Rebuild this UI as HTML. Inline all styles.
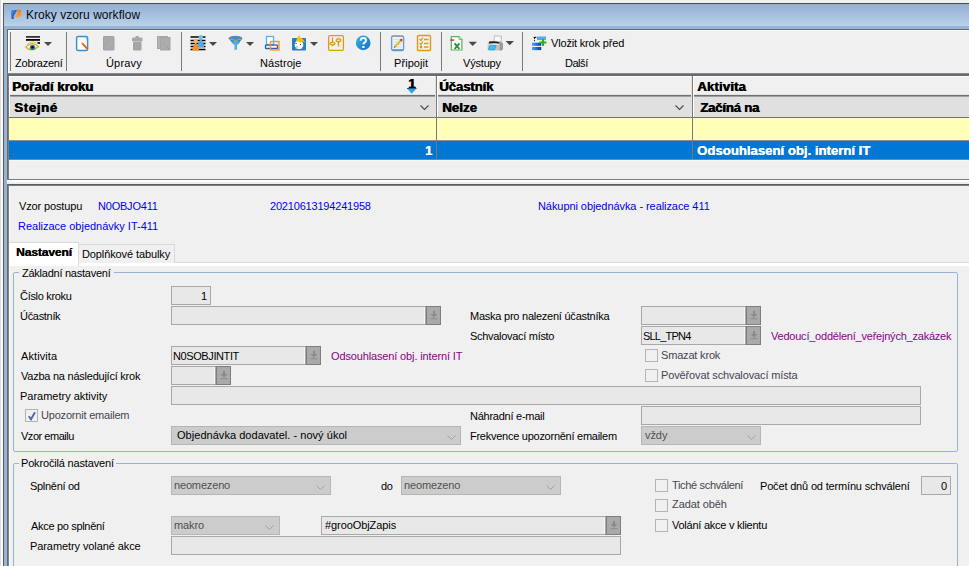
<!DOCTYPE html>
<html><head><meta charset="utf-8">
<style>
*{margin:0;padding:0;box-sizing:border-box}
html,body{width:969px;height:566px;overflow:hidden;background:#f0f0f0;font-family:"Liberation Sans",sans-serif;font-size:11px;color:#000}
.a{position:absolute}
.t{position:absolute;white-space:pre;line-height:13px;font-size:11px}
.b{font-weight:bold}
.blue{color:#0000f0}
.pur{color:#8a008a}
.gr{color:#6d6d6d}
.fld{position:absolute;background:#e8e8e8;border:1px solid #a8a8ac}
.cmb{position:absolute;background:#cccccc;border:1px solid #b6b6b6}
.btn{position:absolute;top:-1px;right:-1px;bottom:-1px;width:16px;background:#a9a9a9;border:1px solid #7e7e7e;border-left-color:#a8a8b0;box-shadow:inset 1px 0 0 #7e7e7e}
.btn::before{content:"";position:absolute;left:-2px;top:0;bottom:0;width:1px;background:#f6f6f6}
.chk{position:absolute;width:13px;height:13px;border:1px solid #b4b4b4;background:#f0f0f0}
.sep{position:absolute;width:1px;background:#7a7a7a;top:32px;height:39px}
.arr{position:absolute;width:0;height:0;border-left:4px solid transparent;border-right:4px solid transparent;border-top:4px solid #444}
</style></head><body>
<!-- window frame -->
<div class="a" style="left:0;top:0;width:1px;height:566px;background:#dcdcdc"></div>
<div class="a" style="left:1px;top:0;width:2px;height:566px;background:#f8f8f8"></div>
<div class="a" style="left:3px;top:3px;width:966px;height:1px;background:#4a4a4a"></div>
<div class="a" style="left:3px;top:3px;width:1px;height:563px;background:#5a5a5a"></div>
<div class="a" style="left:4px;top:4px;width:965px;height:22px;background:linear-gradient(#93afd0,#bad2ea)"></div>
<div class="a" style="left:4px;top:26px;width:965px;height:3px;background:#97b3d3"></div>
<div class="a" style="left:4px;top:26px;width:3px;height:540px;background:#97b3d3"></div>
<div class="a" style="left:7px;top:29px;width:962px;height:1px;background:#6a6a6a"></div>
<div class="a" style="left:7px;top:29px;width:1px;height:537px;background:#6a6a6a"></div>
<div class="a" style="left:8px;top:30px;width:961px;height:1px;background:#fafafa"></div>
<div class="a" style="left:8px;top:30px;width:1px;height:43px;background:#fafafa"></div>

<!-- title -->
<svg class="a" style="left:8px;top:6px" width="18" height="16" viewBox="0 0 18 16">
<defs><linearGradient id="lgb" x1="0" y1="0" x2="1" y2="1"><stop offset="0" stop-color="#4a9cf0"/><stop offset="1" stop-color="#0a2a9a"/></linearGradient>
<linearGradient id="lgo" x1="0" y1="0" x2="0" y2="1"><stop offset="0" stop-color="#f27a1a"/><stop offset="1" stop-color="#ffa040"/></linearGradient></defs>
<path d="M3.5 4 L9.3 4 L5.8 10 L5.6 13 L3.6 13 L3 7 Z" fill="url(#lgb)"/>
<path d="M10 3 L13 4 L13.2 9.5 L10.5 11.5 L7 11.5 L7 9.5 L9 8.5 L9.5 5 Z" fill="url(#lgo)"/>
</svg>

<!-- toolbar -->
<div class="sep" style="left:10px"></div>
<div class="sep" style="left:66px"></div>
<div class="sep" style="left:181px"></div>
<div class="sep" style="left:380px"></div>
<div class="sep" style="left:441px"></div>
<div class="sep" style="left:522px"></div>
<div class="a" style="left:7px;top:73px;width:962px;height:1px;background:#858a92"></div>
<div class="a" style="left:7px;top:74px;width:962px;height:2px;background:#6a6a6a"></div>
<!-- toolbar icons -->
<svg class="a" style="left:24px;top:34px" width="30" height="19" viewBox="0 0 30 19">
<rect x="2" y="2" width="14" height="1.8" fill="#333"/>
<rect x="2" y="5" width="14" height="1.8" fill="#000"/>
<rect x="13.5" y="8" width="2.5" height="2" fill="#222"/>
<path d="M1.8 13.2 Q8 6.5 14.5 12.5 Q8 18.8 1.8 13.2 Z" fill="#f4f4f0" stroke="#dcb020" stroke-width="1.2"/>
<path d="M3 10.5 Q8 6.5 12.5 8.8" fill="none" stroke="#e8c040" stroke-width="1"/>
<circle cx="8.5" cy="13.4" r="2.7" fill="#2a84b0"/>
<circle cx="8.5" cy="13.2" r="1.2" fill="#000"/>
<path d="M20 8 L28 8 L24 12 Z" fill="#484848"/>
</svg>
<svg class="a" style="left:75px;top:35px" width="16" height="17" viewBox="0 0 16 17">
<rect x="1.6" y="1.6" width="11" height="13.8" rx="1.5" fill="#fff" stroke="#3a90d2" stroke-width="1.5"/>
<path d="M9.5 2.3 L11.9 2.3 L11.9 4.8 Z" fill="#8cc4ec"/>
<path d="M7.3 8.3 L12 13.5" stroke="#e86a1c" stroke-width="2" stroke-linecap="round"/>
<path d="M6.6 7.6 L7.6 8.6" stroke="#f6d890" stroke-width="1.6"/>
</svg>
<svg class="a" style="left:102px;top:35px" width="14" height="17" viewBox="0 0 14 17">
<rect x="1.5" y="1.5" width="10.5" height="13.5" rx="0.5" fill="#a9a9a9" stroke="#a2a2a2" stroke-width="1"/>
<path d="M5 12.5 L10.5 7" stroke="#b6b6b6" stroke-width="1"/>
</svg>
<svg class="a" style="left:131px;top:35px" width="13" height="17" viewBox="0 0 13 17">
<rect x="4.5" y="1" width="3.5" height="2" rx="0.8" fill="#a8a8a8"/>
<rect x="1" y="2.5" width="10.5" height="4" rx="1" fill="#a8a8a8"/>
<rect x="2" y="6.8" width="8.5" height="8.7" rx="1" fill="#a4a4a4"/>
<path d="M4.5 8 V14 M6.3 8 V14 M8.1 8 V14" stroke="#ababab" stroke-width="0.6"/>
</svg>
<svg class="a" style="left:156px;top:35px" width="16" height="17" viewBox="0 0 16 17">
<rect x="1.5" y="1.5" width="10" height="12" fill="#b2b2b2" stroke="#a6a6a6" stroke-width="1"/>
<rect x="4.5" y="2.5" width="9.5" height="12.5" fill="#acacac" stroke="#a4a4a4" stroke-width="1"/>
<path d="M9.5 10.5 L13.5 14.5" stroke="#999" stroke-width="1"/>
</svg>
<svg class="a" style="left:189px;top:34px" width="30" height="18" viewBox="0 0 30 18">
<path d="M1.5 3 H16.5 M1.5 6.5 H16.5 M1.5 9.5 H16.5 M1.5 12.5 H16.5 M1.5 15.5 H16.5" stroke="#000" stroke-width="1.5"/>
<circle cx="11.8" cy="3.3" r="2.2" fill="#6cc0ec"/>
<path d="M10.9 5.6 L12.7 5.6 Q13.3 8.5 15.2 10.8 Q15.6 13 14.5 13.3 L9 13.3 Q8 13 8.4 10.8 Q10.3 8.5 10.9 5.6 Z" fill="#52ace0"/>
<circle cx="6.7" cy="6.8" r="2.1" fill="#fcb060"/>
<path d="M5.8 9 L7.6 9 Q8.3 12 10 14 Q10.4 16.2 9.4 16.5 L4 16.5 Q3 16.2 3.3 14 Q5.1 12 5.8 9 Z" fill="#f59028"/>
<path d="M20 8 L28 8 L24 12 Z" fill="#484848"/>
</svg>
<svg class="a" style="left:228px;top:35px" width="28" height="17" viewBox="0 0 28 17">
<defs><linearGradient id="fg" x1="0" y1="0" x2="1" y2="0"><stop offset="0" stop-color="#2a78c0"/><stop offset="0.5" stop-color="#58b4ec"/><stop offset="1" stop-color="#2a78c0"/></linearGradient></defs>
<path d="M1 3.5 Q4.5 9 6.5 10 L6.5 15 L9 14.5 L9 10 Q11 9 14 3.5 Z" fill="url(#fg)"/>
<ellipse cx="7.5" cy="3.3" rx="6.6" ry="2" fill="#3c8ed0" stroke="#2a68a8" stroke-width="0.6"/>
<path d="M1.5 4 Q7.5 6.8 13.5 4" fill="none" stroke="#d8a030" stroke-width="1"/>
<path d="M18 7 L26 7 L22 11 Z" fill="#484848"/>
</svg>
<svg class="a" style="left:264px;top:35px" width="17" height="17" viewBox="0 0 17 17">
<rect x="2.5" y="1.5" width="7" height="8" fill="#fff" stroke="#5ab0ec" stroke-width="1.3"/>
<rect x="1.5" y="10.2" width="12" height="3.3" rx="0.5" fill="#fff" stroke="#2a5cb8" stroke-width="1.3"/>
<rect x="6.5" y="6.5" width="8.5" height="8.5" fill="none" stroke="#f2963a" stroke-width="1.4"/>
</svg>
<svg class="a" style="left:291px;top:34px" width="30" height="18" viewBox="0 0 30 18">
<rect x="1" y="4" width="14" height="12.5" rx="1" fill="#1f82c6"/>
<circle cx="8" cy="10.8" r="4.8" fill="#fff" stroke="#0e5a90" stroke-width="0.6"/>
<path d="M4.5 9.5 h1.2 M6 12.5 v1 M9 10 l1 1" stroke="#223" stroke-width="0.9"/>
<path d="M5 7.5 Q6 3 8.5 1 L9.5 4 Q12.5 4.5 14.2 8.8 L11.5 7.2 L9.2 9 L7.5 7.5 Z" fill="#f6c20c"/>
<path d="M19 8 L27 8 L23 12 Z" fill="#484848"/>
</svg>
<svg class="a" style="left:327px;top:34px" width="18" height="18" viewBox="0 0 18 18">
<rect x="1.6" y="1.6" width="14.8" height="14.8" rx="1.5" fill="none" stroke="#dc9c10" stroke-width="1.3"/>
<path d="M5.5 3.5 V8 M11.5 7.5 V12.5" stroke="#dc9c10" stroke-width="1.3"/>
<ellipse cx="5.5" cy="9.6" rx="2.5" ry="1.3" fill="none" stroke="#dc9c10" stroke-width="1.2"/>
<path d="M4.3 11 L5.5 12.3 L6.7 11" fill="#dc9c10"/>
<ellipse cx="11.5" cy="6.2" rx="2.3" ry="1.4" fill="none" stroke="#dc9c10" stroke-width="1.2"/>
<path d="M10.5 4.7 L11.5 3.2 L12.5 4.7" fill="#dc9c10"/>
</svg>
<svg class="a" style="left:355px;top:35px" width="17" height="16" viewBox="0 0 17 16">
<defs><linearGradient id="hg" x1="0" y1="0" x2="1" y2="1"><stop offset="0" stop-color="#32b4ea"/><stop offset="1" stop-color="#1470c0"/></linearGradient></defs>
<circle cx="8.2" cy="7.9" r="7.3" fill="url(#hg)"/>
<path d="M5.6 5.6 Q5.8 3 8.3 3 Q11 3 11 5.4 Q11 7 9.2 7.8 Q8.4 8.3 8.4 9.6" fill="none" stroke="#fff" stroke-width="1.9"/>
<rect x="7.3" y="11" width="2.2" height="2" fill="#fff"/>
</svg>
<svg class="a" style="left:390px;top:34px" width="16" height="18" viewBox="0 0 16 18">
<rect x="1.6" y="2" width="12" height="14.5" rx="1.5" fill="#e8f4fc" stroke="#6c9ccc" stroke-width="1.4"/>
<path d="M2.5 15.8 H13" stroke="#5a88b8" stroke-width="1"/>
<path d="M3.5 5.5 H12 M3.5 8 H12 M3.5 10.5 H12 M3.5 13 H12" stroke="#c4dcf0" stroke-width="0.8"/>
<path d="M3 2.3 H12.5" stroke="#b89850" stroke-width="1.2" stroke-dasharray="1.2 0.8"/>
<path d="M5 12.8 L10.8 6.5" stroke="#f2b820" stroke-width="2.2"/>
<path d="M10.5 6.8 L12 5.2" stroke="#b83a2a" stroke-width="2.2"/>
<path d="M4.2 13.6 L5.2 12.4" stroke="#707070" stroke-width="1.2"/>
</svg>
<svg class="a" style="left:416px;top:34px" width="17" height="18" viewBox="0 0 17 18">
<rect x="1.5" y="1.5" width="13" height="15" rx="1" fill="none" stroke="#dc9c10" stroke-width="1.4"/>
<path d="M3.5 5 L5 6.5 L7 3.5 M3.5 9 L5 10.5 L7 7.5" fill="none" stroke="#dc9c10" stroke-width="1.2"/>
<circle cx="5" cy="13" r="1.4" fill="#dc9c10"/>
<path d="M8 5.5 H12.5 M8 9.5 H12.5 M8 13 H12.5" stroke="#dc9c10" stroke-width="1.4"/>
</svg>
<svg class="a" style="left:449px;top:35px" width="30" height="17" viewBox="0 0 30 17">
<path d="M2.3 1.6 H10 L12.9 4.5 V15 H2.3 Z" fill="#fff" stroke="#58b458" stroke-width="1.2"/>
<path d="M10 1.6 V4.5 H12.9" fill="#e0f0e0" stroke="#58b458" stroke-width="0.8"/>
<rect x="1.2" y="4.4" width="4" height="1.3" fill="#d42020"/>
<path d="M5.6 8.3 L10.4 14 M10.4 8.3 L5.6 14" stroke="#279038" stroke-width="1.9"/>
<path d="M19.5 6.7 L28 6.7 L23.7 11 Z" fill="#484848"/>
</svg>
<svg class="a" style="left:484px;top:32px" width="32" height="21" viewBox="0 0 32 21">
<path d="M10.5 3.8 L17.5 4.2 L17.2 9.8 L9.8 9.5 Z" fill="#f6f6f6" stroke="#a8a8a8" stroke-width="0.7"/>
<path d="M4 10.5 L16.5 9.5 L19 11 L19 17 L17.5 18.5 L6 18.5 L3.5 16.5 Z" fill="#c2c2c2"/>
<path d="M16 10 L19 11.2 L19 17 L17.5 18.5 L15.5 18 Z" fill="#9a9a9a"/>
<path d="M5 9.6 Q10 8.5 15.5 10.2 L15.5 11.6 Q10 10.5 5 11.6 Z" fill="#202020"/>
<path d="M4.5 12 H15 V13 H4.5 Z" fill="#e0e0e0"/>
<path d="M6.2 13.2 L12.2 13.6 L10.5 18 L4 17.8 Z" fill="#38c0f0" stroke="#1a8cc0" stroke-width="0.5"/>
<path d="M21.5 9 L30 9 L25.7 13.3 Z" fill="#484848"/>
</svg>
<svg class="a" style="left:531px;top:35px" width="17" height="17" viewBox="0 0 17 17">
<defs><linearGradient id="bg2" x1="0" y1="0" x2="1" y2="0"><stop offset="0" stop-color="#4aa8f4"/><stop offset="1" stop-color="#0038a8"/></linearGradient></defs>
<rect x="6" y="1.5" width="9" height="3.5" fill="#58a8f0"/>
<path d="M2 3 L4 1.5 L6 3 Z" fill="#000"/>
<path d="M3.5 3 V7" stroke="#222" stroke-width="1" stroke-dasharray="1.2 0.8"/>
<rect x="1" y="7.7" width="9.2" height="3.1" fill="url(#bg2)"/>
<rect x="1" y="12" width="9.2" height="3.1" fill="url(#bg2)"/>
<path d="M8.5 7.5 H15.5 M12 4 V11" stroke="#30b020" stroke-width="2.2"/>
</svg>


<!-- grid -->
<div class="a" style="left:8px;top:76px;width:961px;height:20px;background:#f0f0f0;border-top:1px solid #fff"></div>
<div class="a" style="left:8px;top:94px;width:961px;height:1px;background:#e4e4e4"></div>
<div class="a" style="left:8px;top:95px;width:961px;height:1px;background:#707070"></div>
<div class="a" style="left:8px;top:96px;width:961px;height:1px;background:#a0a0a0"></div>
<div class="a" style="left:8px;top:97px;width:961px;height:21px;background:#e0e0e0"></div>
<div class="a" style="left:8px;top:117px;width:961px;height:1px;background:#707070"></div>
<div class="a" style="left:9px;top:118px;width:960px;height:22px;background:#ffffb8"></div>
<div class="a" style="left:8px;top:140px;width:961px;height:1px;background:#8c8c8c"></div>
<div class="a" style="left:9px;top:141px;width:960px;height:18px;background:#0077d5"></div>
<div class="a" style="left:8px;top:159px;width:961px;height:20px;background:#f0f0f0"></div>
<div class="a" style="left:9px;top:159px;width:960px;height:1px;background:#8a8478"></div>
<div class="a" style="left:9px;top:160px;width:960px;height:1px;background:#f8f8f8"></div>
<div class="a" style="left:435px;top:76px;width:1px;height:41px;background:#e2e2e2"></div>
<div class="a" style="left:436px;top:76px;width:1px;height:83px;background:#7a7a7a"></div>
<div class="a" style="left:437px;top:76px;width:1px;height:41px;background:#fff"></div>
<div class="a" style="left:691px;top:76px;width:1px;height:41px;background:#e2e2e2"></div>
<div class="a" style="left:692px;top:76px;width:1px;height:83px;background:#7a7a7a"></div>
<div class="a" style="left:693px;top:76px;width:1px;height:41px;background:#fff"></div>
<div class="a" style="left:8px;top:76px;width:1px;height:103px;background:#7e7e7e"></div>
<div class="a" style="left:9px;top:76px;width:1px;height:41px;background:#fff"></div>
<svg class="a" style="left:407px;top:88px" width="10" height="6" viewBox="0 0 10 6"><path d="M0 0.5 H9.5 L4.75 5.8 Z" fill="#28a8e8"/><path d="M0 0.5 H9.5" stroke="#1a5a98" stroke-width="1"/></svg>
<svg class="a" style="left:420px;top:105px" width="9" height="6"><path d="M0.5 0.5 L4.5 4.5 L8.5 0.5" fill="none" stroke="#4a4a4a" stroke-width="1.1"/></svg>
<svg class="a" style="left:675px;top:105px" width="9" height="6"><path d="M0.5 0.5 L4.5 4.5 L8.5 0.5" fill="none" stroke="#4a4a4a" stroke-width="1.1"/></svg>
<div class="a" style="left:7px;top:179px;width:962px;height:1px;background:#76808c"></div>
<div class="a" style="left:7px;top:180px;width:962px;height:2px;background:#fcfcfc"></div>
<div class="a" style="left:7px;top:182px;width:962px;height:2px;background:#eeeeee"></div>
<div class="a" style="left:7px;top:184px;width:962px;height:1px;background:#5e5e5e"></div>
<div class="a" style="left:7px;top:185px;width:962px;height:1px;background:#7a7e84"></div>
<div class="a" style="left:8px;top:185px;width:1px;height:381px;background:#808488"></div>
<div class="a" style="left:9px;top:186px;width:1px;height:380px;background:#fafafa"></div>

<!-- panel header -->

<!-- tabs -->
<div class="a" style="left:9px;top:262px;width:960px;height:1px;background:#d9d9d9"></div>
<div class="a" style="left:9px;top:263px;width:960px;height:3px;background:#fff"></div>
<div class="a" style="left:78px;top:244px;width:97px;height:19px;background:#f0f0f0;border:1px solid #d9d9d9;border-bottom:none"></div>
<div class="a" style="left:9px;top:242px;width:70px;height:24px;background:#fff;border:1px solid #d9d9d9;border-bottom:none;border-left:none"></div>

<!-- groupbox 1 -->
<div class="a" style="left:13px;top:272px;width:945px;height:180px;border:1px solid #98b4d4;border-radius:2px"></div>
<div class="a" style="left:19px;top:270px;width:95px;height:4px;background:#f0f0f0"></div>

<div class="fld" style="left:171px;top:286px;width:40px;height:19px"></div>
<div class="fld" style="left:171px;top:306px;width:270px;height:19px"><div class="btn"><svg style="position:absolute;left:4px;top:4px" width="8" height="9" viewBox="0 0 8 9"><rect x="3" y="0" width="2" height="3.5" fill="#8a8a8a"/><path d="M0.5 3 H7.5 L4 6.5 Z" fill="#8a8a8a"/><rect x="0.5" y="7.2" width="7" height="1" fill="#8a8a8a"/></svg></div></div>
<div class="fld" style="left:641px;top:306px;width:120px;height:19px"><div class="btn"><svg style="position:absolute;left:4px;top:4px" width="8" height="9" viewBox="0 0 8 9"><rect x="3" y="0" width="2" height="3.5" fill="#8a8a8a"/><path d="M0.5 3 H7.5 L4 6.5 Z" fill="#8a8a8a"/><rect x="0.5" y="7.2" width="7" height="1" fill="#8a8a8a"/></svg></div></div>
<div class="fld" style="left:641px;top:326px;width:120px;height:19px"><div class="btn"><svg style="position:absolute;left:4px;top:4px" width="8" height="9" viewBox="0 0 8 9"><rect x="3" y="0" width="2" height="3.5" fill="#8a8a8a"/><path d="M0.5 3 H7.5 L4 6.5 Z" fill="#8a8a8a"/><rect x="0.5" y="7.2" width="7" height="1" fill="#8a8a8a"/></svg></div></div>
<div class="fld" style="left:171px;top:346px;width:150px;height:19px"><div class="btn"><svg style="position:absolute;left:4px;top:4px" width="8" height="9" viewBox="0 0 8 9"><rect x="3" y="0" width="2" height="3.5" fill="#8a8a8a"/><path d="M0.5 3 H7.5 L4 6.5 Z" fill="#8a8a8a"/><rect x="0.5" y="7.2" width="7" height="1" fill="#8a8a8a"/></svg></div></div>
<div class="chk" style="left:645px;top:349px"></div>
<div class="fld" style="left:171px;top:366px;width:60px;height:19px"><div class="btn"><svg style="position:absolute;left:4px;top:4px" width="8" height="9" viewBox="0 0 8 9"><rect x="3" y="0" width="2" height="3.5" fill="#8a8a8a"/><path d="M0.5 3 H7.5 L4 6.5 Z" fill="#8a8a8a"/><rect x="0.5" y="7.2" width="7" height="1" fill="#8a8a8a"/></svg></div></div>
<div class="chk" style="left:645px;top:369px"></div>
<div class="fld" style="left:171px;top:386px;width:750px;height:19px"></div>
<div class="chk" style="left:25px;top:409px"></div>
<svg class="a" style="left:27px;top:411px" width="10" height="10"><path d="M1.8 5.2 L4 8.3 L8 1.2" fill="none" stroke="#5565a5" stroke-width="1.9"/></svg>
<div class="fld" style="left:641px;top:406px;width:280px;height:19px"></div>
<div class="cmb" style="left:171px;top:426px;width:290px;height:19px"></div>
<svg class="a" style="left:447px;top:435px" width="9" height="6"><path d="M0.5 0.5 L4.5 4.5 L8.5 0.5" fill="none" stroke="#a0a0a0" stroke-width="1"/></svg>
<div class="cmb" style="left:641px;top:426px;width:120px;height:19px"></div>
<svg class="a" style="left:747px;top:435px" width="9" height="6"><path d="M0.5 0.5 L4.5 4.5 L8.5 0.5" fill="none" stroke="#a0a0a0" stroke-width="1"/></svg>

<!-- groupbox 2 -->
<div class="a" style="left:13px;top:463px;width:945px;height:110px;border:1px solid #98b4d4;border-radius:2px"></div>
<div class="a" style="left:19px;top:461px;width:97px;height:4px;background:#f0f0f0"></div>
<div class="cmb" style="left:171px;top:476px;width:160px;height:19px"></div>
<svg class="a" style="left:316px;top:485px" width="9" height="6"><path d="M0.5 0.5 L4.5 4.5 L8.5 0.5" fill="none" stroke="#a0a0a0" stroke-width="1"/></svg>
<div class="cmb" style="left:401px;top:476px;width:160px;height:19px"></div>
<svg class="a" style="left:546px;top:485px" width="9" height="6"><path d="M0.5 0.5 L4.5 4.5 L8.5 0.5" fill="none" stroke="#a0a0a0" stroke-width="1"/></svg>
<div class="chk" style="left:655px;top:479px"></div>
<div class="fld" style="left:921px;top:476px;width:30px;height:19px"></div>
<div class="chk" style="left:655px;top:499px"></div>
<div class="cmb" style="left:171px;top:516px;width:109px;height:19px"></div>
<svg class="a" style="left:265px;top:525px" width="9" height="6"><path d="M0.5 0.5 L4.5 4.5 L8.5 0.5" fill="none" stroke="#a0a0a0" stroke-width="1"/></svg>
<div class="fld" style="left:321px;top:516px;width:300px;height:19px"><div class="btn"><svg style="position:absolute;left:4px;top:4px" width="8" height="9" viewBox="0 0 8 9"><rect x="3" y="0" width="2" height="3.5" fill="#8a8a8a"/><path d="M0.5 3 H7.5 L4 6.5 Z" fill="#8a8a8a"/><rect x="0.5" y="7.2" width="7" height="1" fill="#8a8a8a"/></svg></div></div>
<div class="chk" style="left:655px;top:519px"></div>
<div class="fld" style="left:171px;top:536px;width:450px;height:19px"></div>
<div class="t" style="left:26px;top:9px;font-size:12px;letter-spacing:0.04px;color:#0a0a14">Kroky vzoru workflow</div>
<div class="t" style="left:15px;top:57px;font-size:11px;letter-spacing:-0.22px;color:#000">Zobrazení</div>
<div class="t" style="left:106px;top:57px;font-size:11px;letter-spacing:0.18px;color:#000">Úpravy</div>
<div class="t" style="left:260px;top:57px;font-size:11px;letter-spacing:0.07px;color:#000">Nástroje</div>
<div class="t" style="left:394px;top:57px;font-size:11px;letter-spacing:0.07px;color:#000">Připojit</div>
<div class="t" style="left:463px;top:57px;font-size:11px;letter-spacing:-0.18px;color:#000">Výstupy</div>
<div class="t" style="left:565px;top:57px;font-size:11px;letter-spacing:-0.47px;color:#000">Další</div>
<div class="t" style="left:551px;top:37px;font-size:11px;letter-spacing:-0.17px;color:#000">Vložit krok před</div>
<div class="t" style="left:12px;top:81px;font-size:12px;font-weight:700;text-shadow:0.6px 0 0 #000;transform:scaleX(1.1);transform-origin:0 0;letter-spacing:0.04px;color:#000">Pořadí kroku</div>
<div class="t" style="left:439px;top:81px;font-size:12px;font-weight:700;text-shadow:0.6px 0 0 #000;transform:scaleX(1.1);transform-origin:0 0;letter-spacing:-0.1px;color:#000">Účastník</div>
<div class="t" style="left:697px;top:81px;font-size:12px;font-weight:700;text-shadow:0.6px 0 0 #000;transform:scaleX(1.1);transform-origin:0 0;letter-spacing:0.13px;color:#000">Aktivita</div>
<div class="t" style="left:14px;top:102px;font-size:12px;font-weight:700;text-shadow:0.6px 0 0 #000;transform:scaleX(1.1);transform-origin:0 0;letter-spacing:0.6px;color:#000">Stejné</div>
<div class="t" style="left:442px;top:102px;font-size:12px;font-weight:700;text-shadow:0.6px 0 0 #000;transform:scaleX(1.1);transform-origin:0 0;letter-spacing:0.07px;color:#000">Nelze</div>
<div class="t" style="left:700px;top:102px;font-size:12px;font-weight:700;text-shadow:0.6px 0 0 #000;transform:scaleX(1.1);transform-origin:0 0;letter-spacing:-0.2px;color:#000">Začíná na</div>
<div class="t" style="left:408px;top:78px;font-size:12px;font-weight:700;text-shadow:0.6px 0 0 #000;transform:scaleX(1.1);transform-origin:0 0;letter-spacing:0px;color:#000">1</div>
<div class="t" style="left:425px;top:145px;font-size:12px;font-weight:700;text-shadow:0.3px 0 0 #fff;transform:scaleX(1.1);transform-origin:0 0;letter-spacing:0px;color:#fff">1</div>
<div class="t" style="left:697px;top:145px;font-size:12px;font-weight:700;text-shadow:0.3px 0 0 #fff;transform:scaleX(1.1);transform-origin:0 0;letter-spacing:-0.02px;color:#fff">Odsouhlasení obj. interní IT</div>
<div class="t" style="left:19px;top:200px;font-size:11px;letter-spacing:-0.14px;color:#000">Vzor postupu</div>
<div class="t" style="left:98px;top:200px;font-size:11px;letter-spacing:-0.21px;color:#0000f0">N0OBJO411</div>
<div class="t" style="left:270px;top:200px;font-size:11px;letter-spacing:-0.19px;color:#0000f0">20210613194241958</div>
<div class="t" style="left:538px;top:200px;font-size:11px;letter-spacing:-0.07px;color:#0000f0">Nákupni objednávka - realizace 411</div>
<div class="t" style="left:18px;top:220px;font-size:11px;letter-spacing:-0.01px;color:#0000f0">Realizace objednávky IT-411</div>
<div class="t" style="left:16px;top:246px;font-size:11px;font-weight:700;text-shadow:0.3px 0 0 #000;transform:scaleX(1.1);transform-origin:0 0;letter-spacing:-0.14px;color:#000">Nastavení</div>
<div class="t" style="left:82px;top:248px;font-size:11px;letter-spacing:-0.11px;color:#000">Doplňkové tabulky</div>
<div class="t" style="left:22px;top:267px;font-size:11px;letter-spacing:-0.25px;color:#000">Základní nastavení</div>
<div class="t" style="left:20px;top:290px;font-size:11px;letter-spacing:-0.31px;color:#000">Číslo kroku</div>
<div class="t" style="left:201px;top:290px;font-size:11px;letter-spacing:0px;color:#000">1</div>
<div class="t" style="left:20px;top:310px;font-size:11px;letter-spacing:-0.31px;color:#000">Účastník</div>
<div class="t" style="left:470px;top:310px;font-size:11px;letter-spacing:-0.24px;color:#000">Maska pro nalezení účastníka</div>
<div class="t" style="left:470px;top:330px;font-size:11px;letter-spacing:-0.3px;color:#000">Schvalovací místo</div>
<div class="t" style="left:643px;top:330px;font-size:11px;letter-spacing:-0.79px;color:#000">SLL_TPN4</div>
<div class="t" style="left:771px;top:330px;font-size:11px;letter-spacing:-0.22px;color:#8a008a">Vedoucí_oddělení_veřejných_zakázek</div>
<div class="t" style="left:21px;top:350px;font-size:11px;letter-spacing:0.09px;color:#000">Aktivita</div>
<div class="t" style="left:173px;top:350px;font-size:11px;letter-spacing:-0.4px;color:#000">N0SOBJINTIT</div>
<div class="t" style="left:331px;top:350px;font-size:11px;letter-spacing:-0.14px;color:#8a008a">Odsouhlasení obj. interní IT</div>
<div class="t" style="left:661px;top:349px;font-size:11px;letter-spacing:-0.18px;color:#454550">Smazat krok</div>
<div class="t" style="left:21px;top:370px;font-size:11px;letter-spacing:-0.24px;color:#000">Vazba na následující krok</div>
<div class="t" style="left:661px;top:369px;font-size:11px;letter-spacing:-0.13px;color:#454550">Pověřovat schvalovací místa</div>
<div class="t" style="left:20px;top:390px;font-size:11px;letter-spacing:-0.01px;color:#000">Parametry aktivity</div>
<div class="t" style="left:41px;top:409px;font-size:11px;letter-spacing:-0.2px;color:#454550">Upozornit emailem</div>
<div class="t" style="left:470px;top:410px;font-size:11px;letter-spacing:-0.25px;color:#000">Náhradní e-mail</div>
<div class="t" style="left:21px;top:430px;font-size:11px;letter-spacing:-0.47px;color:#000">Vzor emailu</div>
<div class="t" style="left:177px;top:429px;font-size:11px;letter-spacing:0.04px;color:#000">Objednávka dodavatel. - nový úkol</div>
<div class="t" style="left:470px;top:430px;font-size:11px;letter-spacing:-0.26px;color:#000">Frekvence upozornění emailem</div>
<div class="t" style="left:645px;top:429px;font-size:11px;letter-spacing:-0.07px;color:#505050">vždy</div>
<div class="t" style="left:21px;top:457px;font-size:11px;letter-spacing:-0.17px;color:#000">Pokročilá nastavení</div>
<div class="t" style="left:30px;top:480px;font-size:11px;letter-spacing:-0.29px;color:#000">Splnění od</div>
<div class="t" style="left:174px;top:479px;font-size:11px;letter-spacing:-0.16px;color:#505050">neomezeno</div>
<div class="t" style="left:381px;top:480px;font-size:11px;letter-spacing:-0.4px;color:#000">do</div>
<div class="t" style="left:404px;top:479px;font-size:11px;letter-spacing:-0.15px;color:#505050">neomezeno</div>
<div class="t" style="left:672px;top:479px;font-size:11px;letter-spacing:-0.33px;color:#454550">Tiché schválení</div>
<div class="t" style="left:760px;top:480px;font-size:11px;letter-spacing:-0.17px;color:#000">Počet dnů od termínu schválení</div>
<div class="t" style="left:941px;top:480px;font-size:11px;letter-spacing:0px;color:#000">0</div>
<div class="t" style="left:672px;top:498px;font-size:11px;letter-spacing:-0.09px;color:#454550">Zadat oběh</div>
<div class="t" style="left:31px;top:520px;font-size:11px;letter-spacing:-0.32px;color:#000">Akce po splnění</div>
<div class="t" style="left:174px;top:519px;font-size:11px;letter-spacing:-0.12px;color:#505050">makro</div>
<div class="t" style="left:325px;top:519px;font-size:11px;letter-spacing:-0.08px;color:#000">#grooObjZapis</div>
<div class="t" style="left:672px;top:519px;font-size:11px;letter-spacing:-0.25px;color:#000">Volání akce v klientu</div>
<div class="t" style="left:30px;top:540px;font-size:11px;letter-spacing:-0.09px;color:#000">Parametry volané akce</div>
</body></html>
